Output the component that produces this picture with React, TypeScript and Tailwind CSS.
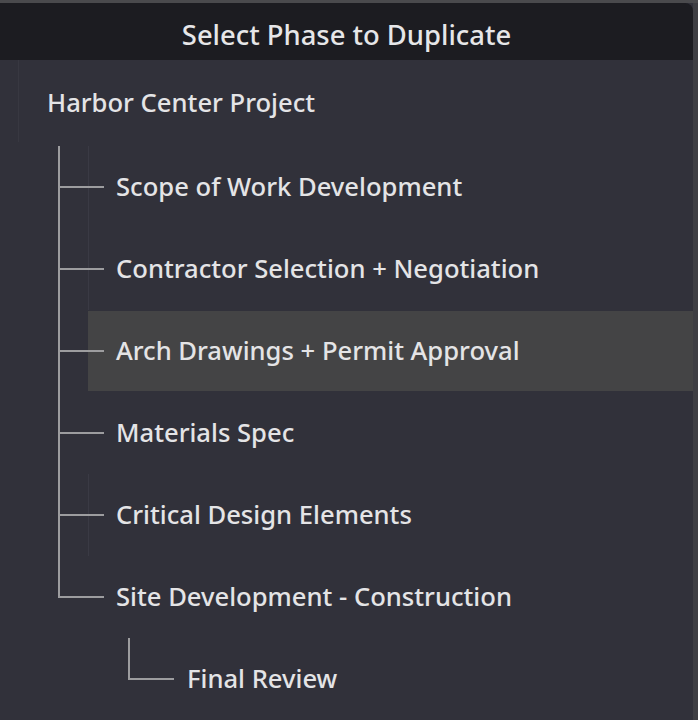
import React from 'react';

const phases = [
  { name: 'Scope of Work Development', faint: true },
  { name: 'Contractor Selection + Negotiation', faint: true },
  { name: 'Arch Drawings + Permit Approval', selected: true },
  { name: 'Materials Spec' },
  { name: 'Critical Design Elements', faint: true },
  { name: 'Site Development - Construction', last: true },
];

const line = 'bg-[#9d9d9f]';
const label = 'text-[25.6px] font-medium text-[#e4e4e6]';

function PhaseRow({ name, selected, faint, last }: { name: string; selected?: boolean; faint?: boolean; last?: boolean }) {
  return (
    <div className="flex h-[82px] shrink-0">
      {/* tree connector */}
      <div className="ml-[58px] flex w-[30px]">
        <div className={`w-[2px] ${line} ${last ? 'h-[42px] self-start' : 'self-stretch'}`} />
        <div className={`h-[2px] flex-1 self-center ${line}`} />
      </div>
      <div
        className={`flex flex-1 items-center border-l ${selected ? 'my-[1px] bg-[#444445]' : ''} ${
          faint ? 'border-[#3a3a44]' : 'border-transparent'
        }`}
      >
        <div className={`-ml-px h-[2px] w-[16px] ${line}`} />
        <span className={`ml-[12px] ${label}`}>{name}</span>
      </div>
    </div>
  );
}

export default function App() {
  return (
    <div
      className="flex h-[720px] w-[698px] flex-col overflow-hidden bg-[#2b2b2f]"
      style={{ fontFamily: '"Noto Sans", "Open Sans", sans-serif' }}
    >
      <div className="h-[3px] shrink-0 bg-[#4a4a4d]" />
      <div className="flex min-h-0 flex-1">
        <div className="flex flex-1 flex-col bg-[#31313a]">
          {/* header */}
          <div className="flex h-[57px] shrink-0 items-center justify-center rounded-tr-[8px] bg-[#1c1c21] pt-[6px]">
            <span className="text-[27.4px] font-medium text-[#e6e6e8]">Select Phase to Duplicate</span>
          </div>

          {/* project root */}
          <div className="flex h-[86px] shrink-0 items-center">
            <div className="ml-[18px] flex h-[82px] items-center self-start border-l border-[#383841] pt-[5px] pl-[28px]">
              <span className={label}>Harbor Center Project</span>
            </div>
          </div>

          {phases.map((p) => (
            <PhaseRow key={p.name} {...p} />
          ))}

          {/* nested child */}
          <div className="flex h-[82px] shrink-0 items-center pl-[128px]">
            <div className={`h-[42px] w-[2px] self-start ${line}`} />
            <div className={`h-[2px] w-[44px] ${line}`} />
            <span className={`ml-[13px] ${label}`}>Final Review</span>
          </div>
        </div>
        <div className="w-[5px] shrink-0 bg-[#3e3e43]" />
      </div>
    </div>
  );
}
